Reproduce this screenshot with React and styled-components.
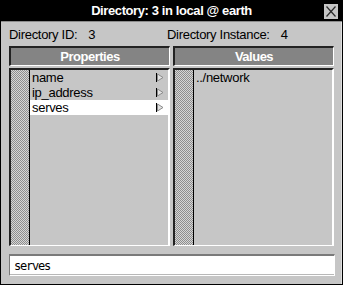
import React from "react";
import styled, { createGlobalStyle } from "styled-components";

const GlobalStyle = createGlobalStyle`
  body {
    margin: 0;
    background: #c6c6c6;
    font-family: "Liberation Sans", Arial, sans-serif;
  }
`;

const properties = ["name", "ip_address", "serves"];
const values = ["../network"];

function Arrow() {
  return (
    <svg width="8" height="9" viewBox="0 0 8 9">
      <line x1="0.5" y1="0" x2="0.5" y2="9" stroke="#000" />
      <polygon points="1.5,1 7,4.5 1.5,8" fill="#e4e4e4" stroke="#8a8a8a" />
    </svg>
  );
}

function CloseGlyph() {
  return (
    <svg width="14" height="15" viewBox="0 0 14 15">
      <line x1="2.5" y1="2.5" x2="11.5" y2="12.5" stroke="#2a2a2a" strokeWidth="1.2" />
      <line x1="11.5" y1="2.5" x2="2.5" y2="12.5" stroke="#2a2a2a" strokeWidth="1.2" />
    </svg>
  );
}

function App() {
  return (
    <>
      <GlobalStyle />
      <Window>
        <TitleBar>
          <span />
          <Title>Directory: 3 in local @ earth</Title>
          <CloseButton>
            <CloseGlyph />
          </CloseButton>
        </TitleBar>
        <Body>
          <InfoRow>
            <InfoPair width="158px">
              <span>Directory ID:</span>
              <span>3</span>
            </InfoPair>
            <InfoPair>
              <span>Directory Instance:</span>
              <span>4</span>
            </InfoPair>
          </InfoRow>
          <Panels>
            <Panel>
              <Header>Properties</Header>
              <List>
                <Stripe />
                <Rows>
                  {properties.map((p) => (
                    <Row key={p} selected={p === "serves"}>
                      <span>{p}</span>
                      <Arrow />
                    </Row>
                  ))}
                </Rows>
              </List>
            </Panel>
            <Panel>
              <Header>Values</Header>
              <List>
                <Stripe />
                <Rows>
                  {values.map((v) => (
                    <Row key={v}>
                      <span>{v}</span>
                    </Row>
                  ))}
                </Rows>
              </List>
            </Panel>
          </Panels>
          <Field>
            <FieldText>serves</FieldText>
          </Field>
        </Body>
      </Window>
    </>
  );
}

export default App;

const Window = styled.div`
  width: 343px;
  height: 285px;
  box-sizing: border-box;
  border: 1px solid #000;
  background: #c6c6c6;
  display: flex;
  flex-direction: column;
`;

const TitleBar = styled.div`
  height: 20px;
  background: #000;
  border-bottom: 1px solid #8c8c8c;
  display: grid;
  grid-template-columns: 1fr auto 1fr;
  align-items: center;
`;

const Title = styled.div`
  color: #fff;
  font-weight: bold;
  font-size: 13px;
  letter-spacing: -0.4px;
  line-height: 20px;
  white-space: nowrap;
`;

const CloseButton = styled.div`
  justify-self: end;
  margin-right: 4px;
  margin-top: 1px;
  width: 14px;
  height: 15px;
  background: #c6c6c6;
  display: flex;
`;

const Body = styled.div`
  flex: 1;
  padding: 0 7px 7px 8px;
  display: flex;
  flex-direction: column;
  box-shadow: inset -1px 0 0 #e0e0e0;
`;

const InfoRow = styled.div`
  height: 24px;
  display: flex;
  align-items: center;
  font-size: 13px;
  letter-spacing: -0.3px;
  color: #000;
`;

const InfoPair = styled.div`
  width: ${(p) => p.width || "auto"};
  display: flex;
  gap: 11px;
  white-space: nowrap;
`;

const Panels = styled.div`
  display: grid;
  grid-template-columns: 161px 161px;
  gap: 3px;
`;

const Panel = styled.div`
  display: flex;
  flex-direction: column;
  gap: 2px;
`;

const Header = styled.div`
  height: 20px;
  box-sizing: border-box;
  background: #848484;
  border-top: 2px solid #222;
  border-left: 2px solid #222;
  border-right: 1px solid #fff;
  border-bottom: 1px solid #fff;
  color: #fff;
  font-weight: bold;
  font-size: 13px;
  letter-spacing: -0.5px;
  line-height: 17px;
  text-align: center;
`;

const List = styled.div`
  height: 178px;
  box-sizing: border-box;
  border-top: 2px solid #222;
  border-left: 2px solid #222;
  border-right: 2px solid #fff;
  border-bottom: 1px solid #fff;
  display: flex;
`;

const Stripe = styled.div`
  width: 18px;
  border-right: 1px solid #000;
  background-image: repeating-conic-gradient(#8e8e8e 0% 25%, #d6d6d6 0% 50%);
  background-size: 2px 2px;
`;

const Rows = styled.div`
  flex: 1;
  display: flex;
  flex-direction: column;
`;

const Row = styled.div`
  height: 15px;
  display: flex;
  align-items: center;
  justify-content: space-between;
  padding: 0 4px 0 2px;
  background: ${(p) => (p.selected ? "#fff" : "transparent")};
  font-size: 13px;
  letter-spacing: -0.3px;
  line-height: 15px;
  color: #000;
  white-space: nowrap;
`;

const Field = styled.div`
  margin-top: 8px;
  height: 22px;
  box-sizing: border-box;
  background: #fff;
  border-top: 2px solid #7a7a7a;
  border-left: 1px solid #7a7a7a;
  border-right: 1px solid #fff;
  border-bottom: 1px solid #fff;
  box-shadow: inset 0 -1px 0 #b8b8b8;
  padding-left: 4px;
  display: flex;
  align-items: center;
`;

const FieldText = styled.span`
  font-family: "DejaVu Sans Mono", monospace;
  font-size: 12px;
  letter-spacing: -1.2px;
  color: #000;
`;
